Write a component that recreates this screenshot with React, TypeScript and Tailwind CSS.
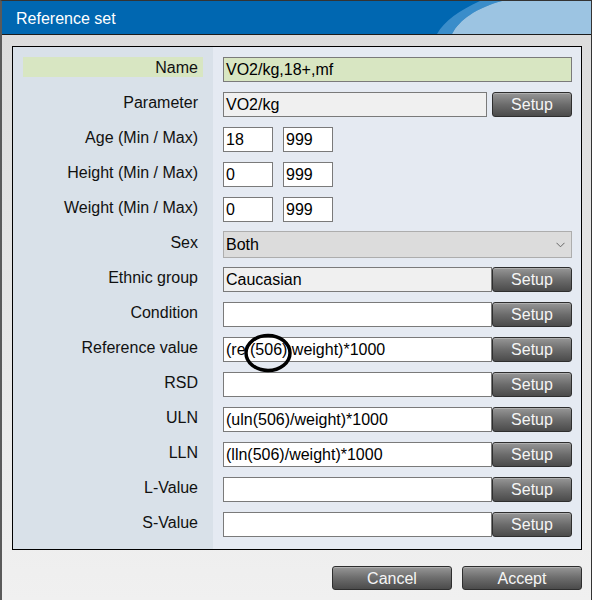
import React from 'react';

type Row = {
  label: string;
  kind: 'text' | 'setup' | 'minmax' | 'select';
  value?: string;
  min?: string;
  max?: string;
  bg?: string;
  gap?: boolean;
  highlight?: boolean;
};

const rows: Row[] = [
  { label: 'Name', kind: 'text', value: 'VO2/kg,18+,mf', highlight: true },
  { label: 'Parameter', kind: 'setup', value: 'VO2/kg', bg: 'bg-[#f0f0f0]', gap: true },
  { label: 'Age (Min / Max)', kind: 'minmax', min: '18', max: '999' },
  { label: 'Height (Min / Max)', kind: 'minmax', min: '0', max: '999' },
  { label: 'Weight (Min / Max)', kind: 'minmax', min: '0', max: '999' },
  { label: 'Sex', kind: 'select', value: 'Both' },
  { label: 'Ethnic group', kind: 'setup', value: 'Caucasian', bg: 'bg-[#f0f0f0]' },
  { label: 'Condition', kind: 'setup', value: '' },
  { label: 'Reference value', kind: 'setup', value: 'REF' },
  { label: 'RSD', kind: 'setup', value: '' },
  { label: 'ULN', kind: 'setup', value: '(uln(506)/weight)*1000' },
  { label: 'LLN', kind: 'setup', value: '(lln(506)/weight)*1000' },
  { label: 'L-Value', kind: 'setup', value: '' },
  { label: 'S-Value', kind: 'setup', value: '' },
];

function GrayButton({ children, className }: { children: React.ReactNode; className: string }) {
  return (
    <button
      type="button"
      className={`flex items-center justify-center rounded-[3px] border border-[#2e2e2e] bg-linear-to-b from-[#979797] via-[#6c6c6c] to-[#4b4b4b] pt-[1px] text-[16px] leading-none text-[#f5f5f5] shadow-[inset_0_1px_0_rgba(255,255,255,0.25)] ${className}`}
    >
      {children}
    </button>
  );
}

function RefValueText() {
  // the ellipse drawn over the text hides the "f" and the "/"
  return (
    <span className="relative">
      (re<span className="text-transparent">f</span>(506)<span className="text-transparent">/</span>weight)*1000
      <svg className="pointer-events-none absolute left-[17px] top-[-8px]" width="52" height="42" viewBox="0 0 52 42">
        <ellipse cx="25" cy="20" rx="22" ry="17.5" fill="none" stroke="#000" strokeWidth="3.5" />
      </svg>
    </span>
  );
}

function Field({ row }: { row: Row }) {
  const box = 'h-[25px] border border-[#7a7a7a] px-[2px] pt-[1px] text-[16px] leading-[22px] text-black whitespace-nowrap';

  if (row.kind === 'text') {
    return <div className={`${box} flex-1 bg-[#d8e6c2]`}>{row.value}</div>;
  }
  if (row.kind === 'minmax') {
    return (
      <div className="flex gap-[10px]">
        <div className={`${box} w-[50px] bg-white`}>{row.min}</div>
        <div className={`${box} w-[50px] bg-white`}>{row.max}</div>
      </div>
    );
  }
  if (row.kind === 'select') {
    return (
      <div className="flex h-[27px] flex-1 items-center justify-between border border-[#adadad] bg-[#dcdcdc] pl-[2px] pr-[6px] pt-[1px] text-[16px] text-black">
        <span>{row.value}</span>
        <svg width="9" height="6" viewBox="0 0 9 6">
          <path d="M0.5 0.8 L4.5 4.8 L8.5 0.8" fill="none" stroke="#666" strokeWidth="1" />
        </svg>
      </div>
    );
  }
  return (
    <div className={`flex flex-1 ${row.gap ? 'gap-[5px]' : ''}`}>
      <div className={`${box} flex-1 ${row.bg ?? 'bg-white'}`}>
        {row.value === 'REF' ? <RefValueText /> : row.value}
      </div>
      <GrayButton className="h-[25px] w-[80px]">Setup</GrayButton>
    </div>
  );
}

export default function App() {
  return (
    <div className="flex h-[600px] w-[592px] flex-col border-l-2 border-r border-t border-l-[#5a5a5a] border-r-[#333] border-t-[#333] font-['Liberation_Sans',Arial,sans-serif]">
      <div className="relative h-[34px] shrink-0 overflow-hidden border-b border-[#1b1b1b] bg-[#0067b1]">
        <svg className="absolute right-0 top-0" width="161" height="33" viewBox="0 0 161 33">
          <path d="M50 0 C30 9 14 20 7 33 L22 33 C29 19 46 7 72 0 Z" fill="#3a8dca" />
          <path d="M72 0 C46 7 29 19 22 33 L161 33 L161 0 Z" fill="#9cc4e2" />
        </svg>
        <div className="relative pl-[14px] pt-[8px] text-[16px] leading-[20px] text-white">Reference set</div>
      </div>

      <div className="flex flex-1 flex-col bg-linear-to-b from-[#dcdcdc] to-[#f0f0f0] pl-[10px] pr-[9px] pt-[11px]">
        <div className="flex border border-black">
          <div className="flex w-[200px] flex-col gap-[10px] bg-[#d9e1e9] pb-[12px] pt-[10px]">
            {rows.map((r) => (
              <div key={r.label} className="h-[25px]">
                <div
                  className={`mx-[10px] h-[20px] pr-[5px] pt-[2px] text-right text-[16px] leading-[18px] text-[#111] ${r.highlight ? 'bg-[#d8e6c2]' : ''}`}
                >
                  {r.label}
                </div>
              </div>
            ))}
          </div>
          <div className="flex flex-1 flex-col gap-[10px] bg-[#e5eaf2] pb-[12px] pl-[10px] pr-[9px] pt-[10px]">
            {rows.map((r) => (
              <div key={r.label} className="flex h-[25px] items-center">
                <Field row={r} />
              </div>
            ))}
          </div>
        </div>

        <div className="mt-[16px] flex justify-end gap-[10px]">
          <GrayButton className="h-[24px] w-[120px]">Cancel</GrayButton>
          <GrayButton className="h-[24px] w-[120px]">Accept</GrayButton>
        </div>
      </div>
    </div>
  );
}
